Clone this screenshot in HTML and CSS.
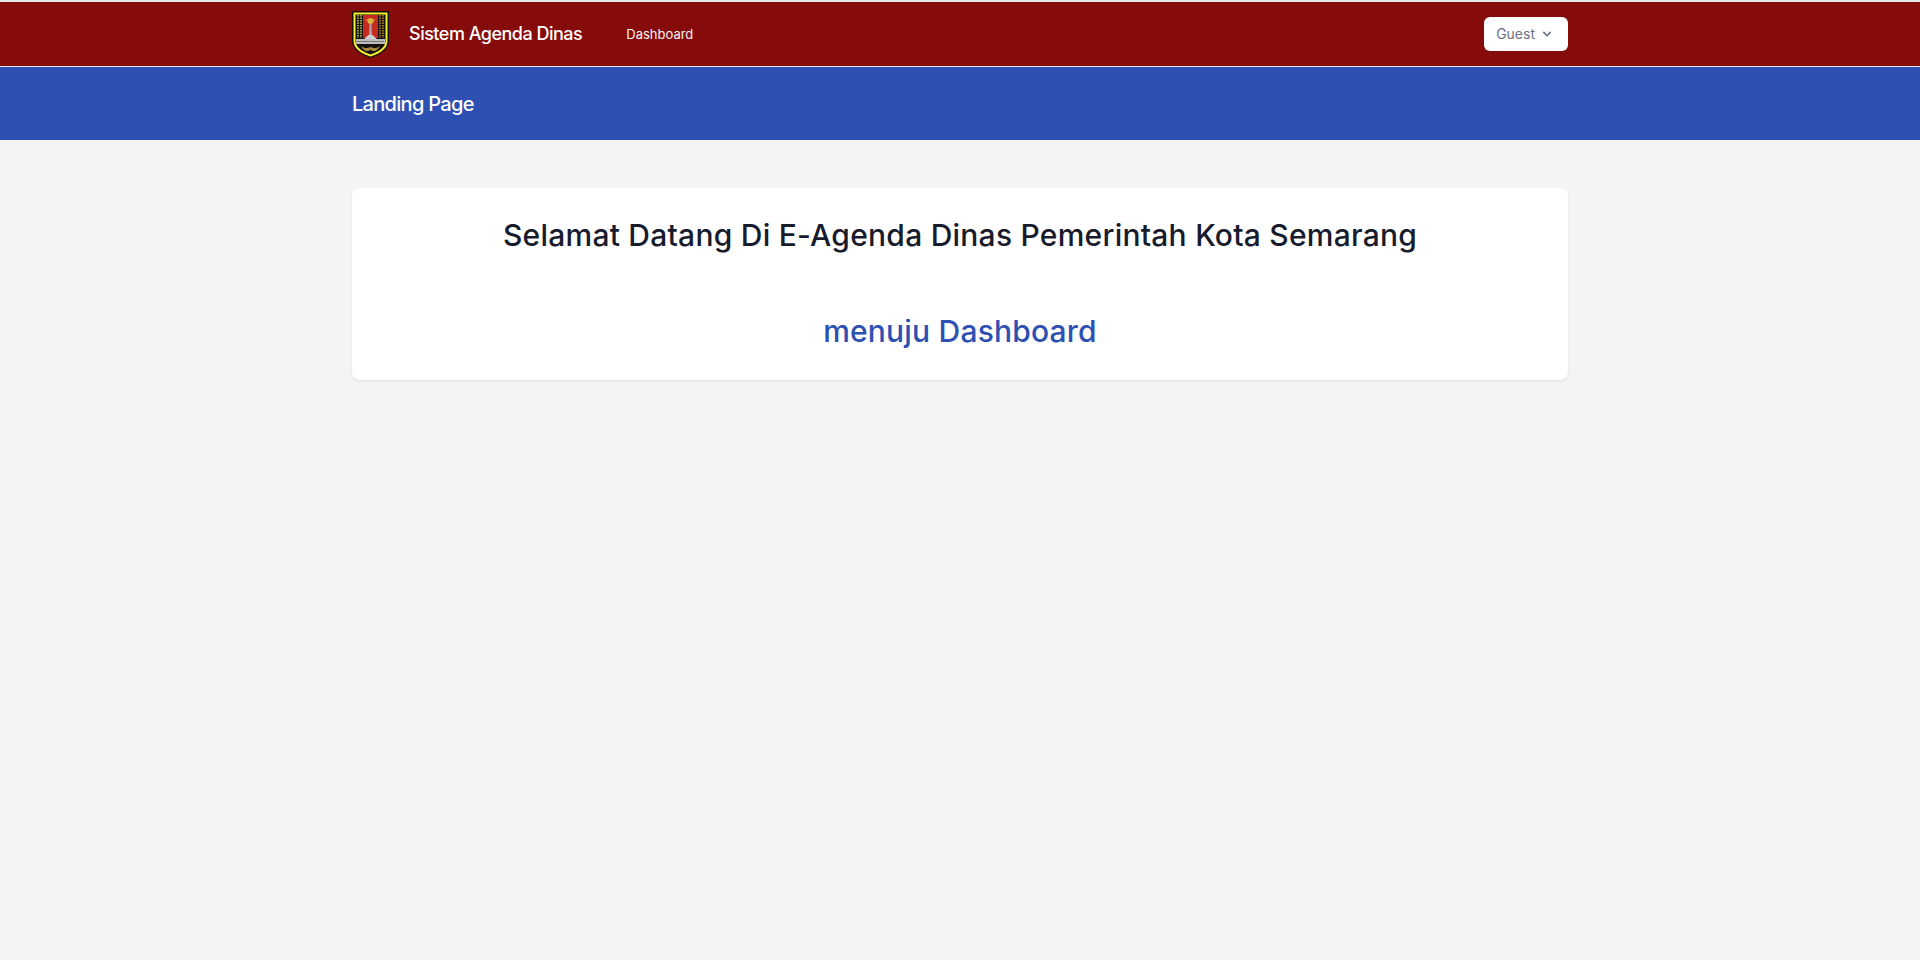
FILE: index.html
```html
<!DOCTYPE html>
<html lang="id">
<head>
    <meta charset="UTF-8">
    <meta name="viewport" content="width=device-width, initial-scale=1.0">
    <title>Sistem Agenda Dinas</title>
    <link rel="stylesheet" href="styles.css">
</head>
<body>
    <nav class="navbar">
        <div class="container navbar-inner">
            <div class="navbar-left">
                <svg class="logo" viewBox="0 0 37 47" aria-label="Logo Kota Semarang">
                    <path d="M0.5 0.5H36.5V30C36.5 39 27 43.500 18.500 46.500C10 43.500 0.5 39 0.5 30Z" fill="#111" stroke="#111"/>
                    <path d="M2.500 2.500H34.500V30C34.500 37.500 26 42 18.500 44.500C11 42 2.500 37.500 2.500 30Z" fill="none" stroke="#f5ee2a" stroke-width="2"/>
                    <path d="M6 4V27M9 4V27" stroke="#cfd05a" stroke-width="1.500" stroke-dasharray="1.500 1"/>
                    <path d="M28 4V27M31 4V27" stroke="#c98a1e" stroke-width="1.500" stroke-dasharray="1.500 1"/>
                    <rect x="11" y="4" width="15" height="23" fill="#c62a20"/>
                    <circle cx="18.500" cy="10" r="3" fill="#d9b440"/>
                    <path d="M14 9H23" stroke="#d9b440"/>
                    <path d="M17.500 13H19.500L20 24H17Z" fill="#a3a3a3"/>
                    <path d="M11 29L16.500 24H20.500L26 29Z" fill="#cfcfcf"/>
                    <rect x="4" y="28" width="29" height="5" fill="#bdbdbd"/>
                    <path d="M4.500 30.500H32.500" stroke="#2c2c2c" stroke-dasharray="1 1"/>
                    <path d="M9 35C13 38 16 37 18.500 36C21 37 24 38 28 35C25 41 21 41 18.500 39C16 41 12 41 9 35Z" fill="#a88a3a"/>
                </svg>
                <span class="brand">Sistem Agenda Dinas</span>
                <a class="nav-link" href="#">Dashboard</a>
            </div>
            <button class="guest-btn" type="button">
                Guest
                <svg class="chevron" viewBox="0 0 20 20" fill="currentColor"><path fill-rule="evenodd" d="M5.293 7.293a1 1 0 011.414 0L10 10.586l3.293-3.293a1 1 0 111.414 1.414l-4 4a1 1 0 01-1.414 0l-4-4a1 1 0 010-1.414z" clip-rule="evenodd"/></svg>
            </button>
        </div>
    </nav>

    <header class="page-header">
        <div class="container">
            <h2 class="page-title">Landing Page</h2>
        </div>
    </header>

    <main class="content">
        <div class="container">
            <div class="card">
                <h1 class="welcome">Selamat Datang Di E-Agenda Dinas Pemerintah Kota Semarang</h1>
                <a class="dashboard-link" href="#">menuju Dashboard</a>
            </div>
        </div>
    </main>
</body>
</html>
```

FILE: styles.css
```css
body {
    margin: 0;
    min-height: 960px;
    background-color: #f3f4f6;
    font-family: 'Inter', 'Noto Sans', sans-serif;
    color: #111827;
}
.container {
    width: 1216px;
    margin: 0 auto;
}
.navbar {
    background-color: #860b0b;
    border-top: 2px solid #e5e7eb;
    border-bottom: 1px solid #e5e7eb;
}
.navbar-inner {
    display: flex;
    align-items: center;
    justify-content: space-between;
    height: 64px;
}
.navbar-left {
    display: flex;
    align-items: center;
}
.logo {
    width: 37px;
    height: 47px;
    margin-right: 20px;
}
.brand {
    color: #fff;
    font-size: 18px;
    font-weight: 500;
    letter-spacing: -0.5px;
    margin-right: 44px;
    padding-bottom: 2px;
}
.nav-link {
    color: #f3f4f6;
    font-size: 13px;
    text-decoration: none;
    padding-bottom: 1px;
}
.guest-btn {
    display: flex;
    align-items: center;
    height: 34px;
    padding: 0 13px 2px 12px;
    background-color: #fff;
    color: #6b7280;
    border: 0;
    border-radius: 6px;
    font-family: inherit;
    font-size: 14px;
}
.chevron {
    width: 16px;
    height: 16px;
    margin: 2px 0 0 4px;
}
.page-header {
    background-color: #2d50b2;
    height: 73px;
    display: flex;
    align-items: center;
}
.page-title {
    margin: 0;
    color: #fff;
    font-size: 20px;
    font-weight: 500;
    letter-spacing: -0.7px;
}
.content {
    padding-top: 48px;
}
.card {
    background-color: #fff;
    border-radius: 8px;
    box-shadow: 0 1px 3px rgba(0, 0, 0, 0.08);
    padding: 27px 24px 24px;
    text-align: center;
    height: 192px;
    box-sizing: border-box;
}
.welcome {
    margin: 0;
    font-size: 30px;
    line-height: 40px;
    font-weight: 500;
    letter-spacing: 0.24px;
    color: #171b2c;
}
.dashboard-link {
    display: block;
    margin-top: 56px;
    font-size: 30px;
    line-height: 40px;
    font-weight: 500;
    letter-spacing: 0.2px;
    color: #2d50b2;
    text-decoration: none;
}
```
